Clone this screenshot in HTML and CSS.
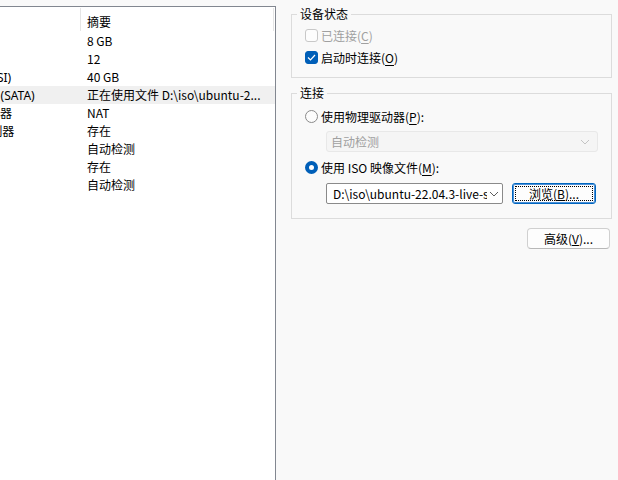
FILE: index.html
```html
<!DOCTYPE html>
<html lang="zh-CN">
<head>
  <meta charset="UTF-8" />
  <title>虚拟机设置</title>
  <link rel="stylesheet" href="styles.css">
</head>
<body>
  <div class="dialog">
    <div class="device-list">
      <div class="list-header">
        <div class="head-cell head-device"></div>
        <div class="head-cell head-summary">摘要</div>
      </div>
      <div class="row"><span class="col-device"><span class="name">内存</span></span><span class="col-summary">8 GB</span></div>
      <div class="row"><span class="col-device"><span class="name">处理器</span></span><span class="col-summary">12</span></div>
      <div class="row"><span class="col-device"><span class="name name-latin">硬盘 (SCSI)</span></span><span class="col-summary">40 GB</span></div>
      <div class="row selected"><span class="col-device"><span class="name name-latin">CD/DVD (SATA)</span></span><span class="col-summary">正在使用文件 D:\iso\ubuntu-2...</span></div>
      <div class="row"><span class="col-device"><span class="name">网络适配器</span></span><span class="col-summary">NAT</span></div>
      <div class="row"><span class="col-device"><span class="name">USB 控制器</span></span><span class="col-summary">存在</span></div>
      <div class="row"><span class="col-device"><span class="name">声卡</span></span><span class="col-summary">自动检测</span></div>
      <div class="row"><span class="col-device"><span class="name">打印机</span></span><span class="col-summary">存在</span></div>
      <div class="row"><span class="col-device"><span class="name">显示器</span></span><span class="col-summary">自动检测</span></div>
    </div>

    <div class="settings">
      <fieldset class="group group-state">
        <legend>设备状态</legend>
        <div class="group-body">
          <label class="option disabled">
            <span class="checkbox"></span>已连接(<u>C</u>)
          </label>
          <label class="option">
            <span class="checkbox checked">
              <svg width="9" height="7" viewBox="0 0 9 7"><polyline points="1,3.5 3.5,6 8,1" fill="none" stroke="#fff" stroke-width="1.2"/></svg>
            </span>启动时连接(<u>O</u>)
          </label>
        </div>
      </fieldset>

      <fieldset class="group group-connect">
        <legend>连接</legend>
        <div class="group-body">
          <label class="option">
            <span class="radio"></span>使用物理驱动器(<u>P</u>):
          </label>
          <div class="select select-disabled">
            <span class="select-text">自动检测</span>
            <svg width="10" height="6" viewBox="0 0 10 6"><polyline points="1,1 5,5 9,1" fill="none" stroke="#c4c4c4" stroke-width="1"/></svg>
          </div>
          <label class="option">
            <span class="radio checked"></span>使用 ISO 映像文件(<u>M</u>):
          </label>
          <div class="iso-row">
            <div class="select select-iso">
              <span class="select-text">D:\iso\ubuntu-22.04.3-live-s</span>
              <svg width="10" height="6" viewBox="0 0 10 6"><polyline points="1,1 5,5 9,1" fill="none" stroke="#5c5c5c" stroke-width="1"/></svg>
            </div>
            <button class="btn btn-focus"><span class="focus-ring">浏览(<u>B</u>)...</span></button>
          </div>
        </div>
      </fieldset>

      <div class="actions">
        <button class="btn">高级(<u>V</u>)...</button>
      </div>
    </div>
  </div>
</body>
</html>
```

FILE: styles.css
```css
body {
  margin: 0;
  font-family: "Noto Sans CJK SC", sans-serif;
  font-size: 12px;
  color: #000;
}
.dialog {
  display: flex;
  width: 618px;
  height: 480px;
  background: #f9f9f9;
  overflow: hidden;
}

/* device list on the left */
.device-list {
  width: 275px;
  flex-shrink: 0;
  margin-top: 6px;
  background: #fff;
  border-top: 1px solid #828790;
  border-right: 1px solid #828790;
  overflow: hidden;
}
.list-header {
  display: flex;
  height: 25px;
}
.head-cell {
  margin: 1px 0 1px 0;
  border-right: 1px solid #e5e5e5;
  line-height: 23px;
  box-sizing: border-box;
}
.head-device {
  width: 81px;
}
.head-summary {
  width: 193px;
  padding: 2px 0 0 6px;
}
.row {
  display: flex;
  height: 18px;
  line-height: 18px;
  white-space: nowrap;
}
.row.selected {
  background: #f0f0f0;
}
.col-device {
  width: 81px;
  flex-shrink: 0;
}
.col-device .name {
  display: inline-block;
  margin-left: -48px;
}
.col-device .name-latin {
  font-family: "Noto Sans", "Noto Sans CJK SC", sans-serif;
}
.col-summary {
  padding-left: 6px;
}

/* settings on the right */
.settings {
  flex: 1;
  padding: 6px 6px 0 15px;
}
.group {
  margin: 0;
  padding: 0 0 0 5px;
  border: 1px solid #dcdcdc;
  min-width: 0;
}
.group legend {
  padding: 0 3px;
  line-height: 16px;
}
.group-body {
  padding: 0 13px 0 8px;
}
.group-state .group-body {
  padding-top: 2px;
  padding-bottom: 9px;
}
.group-connect {
  margin-top: 7px;
}
.group-connect .group-body {
  padding-top: 5px;
  padding-bottom: 14px;
}
.option {
  display: flex;
  align-items: center;
  height: 22px;
}
.group-connect .option {
  height: 20px;
}
.option.disabled {
  color: #a0a0a0;
}
.option u {
  text-underline-offset: 2px;
}
.checkbox {
  display: flex;
  align-items: center;
  justify-content: center;
  width: 13px;
  height: 13px;
  margin-right: 3px;
  box-sizing: border-box;
  border: 1px solid #c8c8c8;
  border-radius: 3px;
  background: #fdfdfd;
}
.checkbox.checked {
  border-color: #005fb8;
  background: #005fb8;
}
.radio {
  width: 13px;
  height: 13px;
  margin-right: 3px;
  box-sizing: border-box;
  border: 1px solid #8a8a8a;
  border-radius: 50%;
  background: #fcfcfc;
}
.radio.checked {
  border: 4px solid #005fb8;
  background: #fff;
}
.select {
  display: flex;
  align-items: center;
  height: 21px;
  box-sizing: border-box;
  padding: 0 7px 0 4px;
  white-space: nowrap;
}
.select-text {
  flex: 1;
  overflow: hidden;
}
.select svg {
  flex-shrink: 0;
  margin-left: 2px;
}
.select-disabled {
  margin: 5px 0 5px 21px;
  background: #f5f5f5;
  border: 1px solid #e8e8e8;
  border-radius: 3px;
  color: #a0a0a0;
}
.iso-row {
  display: flex;
  gap: 9px;
  margin: 6px 0 0 21px;
}
.select-iso {
  width: 177px;
  background: #fff;
  border: 1px solid #8a8a8a;
  border-radius: 2px;
  padding: 0 3px 0 6px;
}
.btn {
  width: 84px;
  height: 21px;
  padding: 0;
  font: inherit;
  color: #000;
  background: #fdfdfd;
  border: 1px solid #d0d0d0;
  border-bottom-color: #b8b8b8;
  border-radius: 4px;
}
.btn-focus {
  padding: 2px;
  border: 1px solid #0067c0;
  border-radius: 3px;
  box-shadow: inset 0 0 0 1px #4c8fd6;
}
.focus-ring {
  display: flex;
  align-items: center;
  justify-content: center;
  height: 100%;
  box-sizing: border-box;
  border: 1px dotted #000;
}
.actions {
  display: flex;
  justify-content: flex-end;
  margin: 9px 2px 0 0;
}
.actions .btn {
  width: 83px;
}
```
